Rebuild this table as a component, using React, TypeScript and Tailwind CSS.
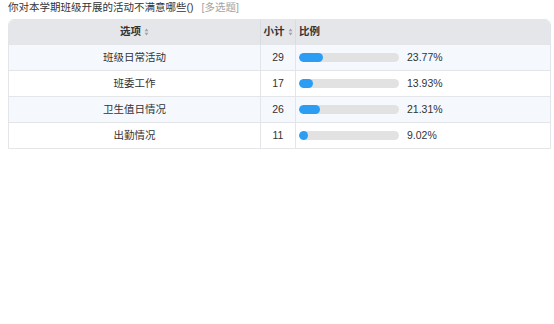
const rows = [
  { name: "班级日常活动", count: 29, pct: 23.77 },
  { name: "班委工作", count: 17, pct: 13.93 },
  { name: "卫生值日情况", count: 26, pct: 21.31 },
  { name: "出勤情况", count: 11, pct: 9.02 },
];

const SortIcon = () => (
  <svg width="5" height="8" viewBox="0 0 5 8" className="ml-[3px] inline-block">
    <path d="M2.5 0.5 L4.5 3.2 H0.5 Z" fill="#9ca3af" />
    <path d="M2.5 7.5 L4.5 4.8 H0.5 Z" fill="#9ca3af" />
  </svg>
);

export default function App() {
  return (
    <div
      className="w-[554px] h-[324px] bg-white text-[10.5px] text-[#333]"
      style={{ fontFamily: '"Liberation Sans", "Noto Sans CJK SC", sans-serif' }}
    >
      <div className="h-[18px] leading-[14px] pl-[8px] flex items-start">
        <span>你对本学期班级开展的活动不满意哪些()</span>
        <span className="ml-[8px] text-[#a3a3a3]">[多选题]</span>
      </div>
      <div className="ml-[8px] w-[543px] mt-[1px] border border-[#e3e5e8] rounded-t-[6px] overflow-hidden">
        <div className="grid grid-cols-[252px_35px_1fr] h-[24px] bg-[#e4e6ea] font-bold text-[#333]">
          <div className="flex items-center justify-center border-r border-[#d8dbe0]">
            选项<SortIcon />
          </div>
          <div className="flex items-center justify-center border-r border-[#d8dbe0]">
            小计<SortIcon />
          </div>
          <div className="flex items-center pl-[3px]">比例</div>
        </div>
        {rows.map((r, i) => (
          <div
            key={r.name}
            className={`grid grid-cols-[252px_35px_1fr] h-[26px] border-t border-[#e3e5e8] ${
              i % 2 === 0 ? "bg-[#f5f8fc]" : "bg-white"
            }`}
          >
            <div className="flex items-center justify-center border-r border-[#e3e5e8]">{r.name}</div>
            <div className="flex items-center justify-center border-r border-[#e3e5e8]">{r.count}</div>
            <div className="flex items-center pl-[3px]">
              <div className="w-[100px] h-[9px] rounded-full bg-[#e2e2e2] overflow-hidden">
                <div className="h-full rounded-full bg-[#2b9ef4]" style={{ width: `${Math.max(r.pct, 7)}%` }} />
              </div>
              <span className="ml-[8px]">{r.pct.toFixed(2)}%</span>
            </div>
          </div>
        ))}
      </div>
    </div>
  );
}
